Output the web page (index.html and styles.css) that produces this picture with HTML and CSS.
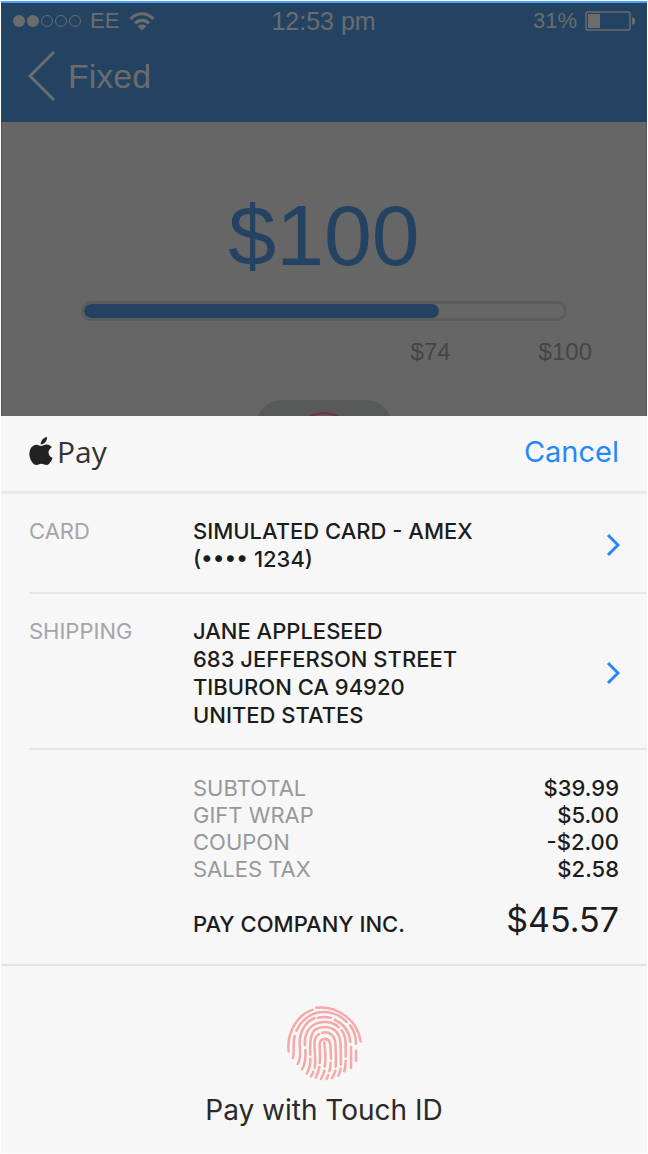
FILE: index.html
```html
<!DOCTYPE html>
<html lang="en">
<head>
<meta charset="utf-8">
<meta name="viewport" content="width=device-width, initial-scale=1">
<title>Apple Pay</title>
<link rel="stylesheet" href="styles.css">
</head>
<body>
<main class="screen">
  <header class="topbar">
    <div class="status">
      <div class="status-left">
        <svg class="signal" width="70" height="14" viewBox="0 0 70 14" aria-hidden="true">
          <circle cx="7" cy="7" r="6" fill="currentColor"/><circle cx="21" cy="7" r="6" fill="currentColor"/>
          <g fill="none" stroke="currentColor"><circle cx="35" cy="7" r="5.5"/><circle cx="49" cy="7" r="5.5"/><circle cx="63" cy="7" r="5.5"/></g>
        </svg>
        <span>EE</span>
        <svg width="26" height="20" viewBox="0 0 26 20" aria-hidden="true">
          <g fill="none" stroke="currentColor" stroke-width="3.2"><path d="M1.5 8C8 1 18 1 24.500 8"/><path d="M6 12.300C10 8.300 16 8.300 20 12.300"/></g>
          <path d="M8.500 15.200C11 12.800 15 12.800 17.500 15.200L13 19.500Z" fill="currentColor"/>
        </svg>
      </div>
      <span class="time">12:53 pm</span>
      <div class="status-right">
        <span>31%</span>
        <svg width="50" height="20" viewBox="0 0 50 20" aria-hidden="true">
          <rect x="1" y="1" width="44" height="18" rx="2" fill="none" stroke="currentColor" stroke-width="1.500"/>
          <rect x="3" y="3" width="12" height="14" fill="currentColor"/>
          <path d="M47 6.500a3.500 3.500 0 0 1 0 7Z" fill="currentColor"/>
        </svg>
      </div>
    </div>
    <a class="back" href="#">
      <svg width="28" height="50" viewBox="0 0 28 50" aria-hidden="true"><path d="M26 1L2 25L26 49" fill="none" stroke="currentColor" stroke-width="3"/></svg>
      Fixed
    </a>
  </header>

  <section class="goal">
    <h1 class="amount">$100</h1>
    <div class="progress" role="progressbar" aria-label="Raised" aria-valuemin="0" aria-valuemax="100" aria-valuenow="74">
      <div class="progress-fill" style="width:74%"></div>
    </div>
    <div class="scale"><span>$74</span><span>$100</span></div>
    <div class="pill">
      <svg width="60" height="60" viewBox="0 0 60 60" aria-hidden="true"><circle cx="30" cy="30" r="29" fill="none" stroke="currentColor" stroke-width="2"/></svg>
    </div>
  </section>

  <section class="sheet" aria-label="Apple Pay">
    <div class="sheet-head">
      <div class="brand">
        <svg width="24" height="29" viewBox="0 0 24 30" aria-hidden="true">
          <path d="M11.800 7.800C11.300 4 14.500.6 18.200 0C18.600 4 15.500 7.500 11.800 7.800Z"/>
          <path d="M12 9.200C14 9.200 15.500 7.600 18 7.700C20.200 7.800 22.200 8.900 23.200 10.700C18.300 13.400 18.900 19.700 24 21.800C22.800 25 20.500 28.900 18 28.900C15.700 28.900 14.800 27.600 12.500 27.600C10.200 27.600 9.100 28.900 7 28.900C3.600 28.900 0 22.800 0 17.600C0 11.500 3.500 7.900 7.300 7.900C9.400 7.900 10.800 9.200 12 9.200Z"/>
        </svg>
        <span>Pay</span>
      </div>
      <button class="cancel" type="button">Cancel</button>
    </div>

    <div class="details">
      <button class="row" type="button">
        <span class="label">CARD</span>
        <span class="value">SIMULATED CARD - AMEX<br>(•••• 1234)</span>
        <svg class="chevron" width="14" height="24" viewBox="0 0 14 24" aria-hidden="true"><path d="M2 2L12 12L2 22"/></svg>
      </button>
      <button class="row" type="button">
        <span class="label">SHIPPING</span>
        <span class="value">JANE APPLESEED<br>683 JEFFERSON STREET<br>TIBURON CA 94920<br>UNITED STATES</span>
        <svg class="chevron" width="14" height="24" viewBox="0 0 14 24" aria-hidden="true"><path d="M2 2L12 12L2 22"/></svg>
      </button>
    </div>

    <div class="summary">
      <table class="totals">
        <tbody>
          <tr><th scope="row">SUBTOTAL</th><td>$39.99</td></tr>
          <tr><th scope="row">GIFT WRAP</th><td>$5.00</td></tr>
          <tr><th scope="row">COUPON</th><td>-$2.00</td></tr>
          <tr><th scope="row">SALES TAX</th><td>$2.58</td></tr>
        </tbody>
        <tfoot><tr><th scope="row">PAY COMPANY INC.</th><td>$45.57</td></tr></tfoot>
      </table>
    </div>

    <button class="touch" type="button">
      <svg width="76" height="76" viewBox="36 31 228 228" aria-hidden="true">
        <g fill="none" stroke="currentColor" stroke-width="7.500" stroke-linecap="round">
          <path d="M44 170C38 118 66 62 116 45M127 39C190 32 250 76 260 140"/>
          <path d="M67 108C80 80 105 60 128 54C160 48 195 56 218 82M228 92C240 106 246 125 246 148M62 124C56 150 62 165 57 190M246 168V198"/>
          <path d="M71 208C80 192 79 180 77 150C75 110 96 80 122 70M132 69C145 66 158 66 170 69M182 76C210 88 226 112 229 142M231 157V220"/>
          <path d="M93 152C90 118 105 92 135 84C160 78 185 86 194 98M203 107C214 122 216 140 215 158V186M215 198C215 210 214 220 211 230M94 166C96 190 92 210 84 224"/>
          <path d="M109 180C109 165 103 120 125 104C150 90 187 96 197 130C203 155 199 190 201 210M109 192C110 207 105 225 98 237M200 222C199 230 196 236 193 243"/>
          <path d="M122 220C128 190 117 150 123 135C126 126 130 121 136 118M145 114C165 109 182 122 184 145C186 175 186 200 185 216M118 231C117 237 113 241 111 245M184 228C182 238 178 245 174 250"/>
          <path d="M137 205C140 185 136 165 137 148C138 130 163 126 168 146C171 165 170 180 171 192M136 217C134 230 130 240 125 249M170 204C170 214 169 222 166 230M163 241L158 253"/>
          <path d="M151 143C154 170 156 200 152 216M151 228C149 238 145 246 141 253"/>
        </g>
      </svg>
      <span>Pay with Touch ID</span>
    </button>
  </section>
</main>
</body>
</html>
```
FILE: styles.css
```css
* { box-sizing: border-box; }
body {
  margin: 0;
  padding: 1px;
  background: #fff;
  font-family: Inter, "Liberation Sans", sans-serif;
}
button {
  border: 0;
  padding: 0;
  background: none;
  font: inherit;
  color: inherit;
  cursor: pointer;
}
svg { display: block; flex: none; }
.screen {
  display: flex;
  flex-direction: column;
  min-height: calc(100vh - 2px);
}

/* Dimmed app behind the sheet */
.topbar, .goal { font-family: "Liberation Sans", Arial, sans-serif; }
.topbar {
  display: flex;
  flex-direction: column;
  align-items: stretch;
  background: #244362;
  border-top: 2px solid #4da1f5;
  color: #6b6c6e;
  padding-bottom: 20px;
}
.status {
  display: grid;
  grid-template-columns: 1fr auto 1fr;
  align-items: center;
  height: 36px;
  padding: 0 12px 0 11px;
  font-size: 22px;
}
.status-left, .status-right { display: flex; align-items: center; gap: 8px; }
.status-left svg:last-child { margin-left: 2px; }
.status-right { justify-content: flex-end; }
.time { font-size: 25px; }
.back {
  display: flex;
  align-self: flex-start;
  align-items: center;
  gap: 12px;
  margin: 11px 0 0 27px;
  height: 52px;
  color: inherit;
  font-size: 34px;
  text-decoration: none;
}
.goal {
  height: 294px;
  overflow: hidden;
  background: #666;
  border: solid #555;
  border-width: 0 1px;
  color: #444645;
}
.amount {
  margin: 64px 0 0;
  color: #244362;
  font-size: 86px;
  font-weight: 400;
  line-height: 98px;
  text-align: center;
}
.progress {
  margin: 17px 79px 0;
  height: 20px;
  border: 3px solid #5b5c5b;
  border-radius: 10px;
  overflow: hidden;
}
.progress-fill { height: 100%; border-radius: 7px; background: #244362; }
.scale {
  display: flex;
  justify-content: flex-end;
  gap: 88px;
  margin-top: 17px;
  padding-right: 54px;
  font-size: 24px;
  line-height: 28px;
}
.pill {
  display: flex;
  justify-content: center;
  width: 136px;
  margin: 34px auto 0;
  padding: 12px 0;
  border-radius: 26px;
  background: #585a59;
  color: #742f46;
}

/* Payment sheet */
.sheet {
  flex: 1;
  display: flex;
  flex-direction: column;
  background: #f7f7f7;
  color: #1c1c1c;
}
.sheet-head {
  display: flex;
  justify-content: space-between;
  align-items: center;
  height: 78px;
  padding: 0 28px 4px;
  border-bottom: 3px solid #e9e9ea;
}
.brand {
  display: flex;
  align-items: center;
  gap: 4px;
  color: #333;
  font-family: "Open Sans", "Noto Sans", sans-serif;
  font-size: 30px;
  font-weight: 400;
}
.brand svg { fill: #222; }
.cancel { color: #2388fb; font-size: 29px; }
.details { padding-left: 28px; font-size: 22px; font-weight: 500; }
.row {
  display: grid;
  grid-template-columns: 164px 1fr auto;
  width: 100%;
  padding: 23px 27px 19px 0;
  border-bottom: 2px solid #e6e6e7;
  line-height: 28px;
  text-align: left;
}
.label { color: #a5a5a9; font-weight: 400; }
.chevron { align-self: center; fill: none; stroke: #2388fb; stroke-width: 3; }
.summary { padding: 25px 28px 18px 192px; border-bottom: 2px solid #e3e3e4; }
.totals { width: 100%; border-collapse: collapse; font-size: 22px; line-height: 27px; }
.totals th { padding: 0; color: #98989c; font-weight: 400; text-align: left; }
.totals td { padding: 0; font-weight: 500; text-align: right; }
.totals tfoot th, .totals tfoot td { padding-top: 15px; line-height: 44px; vertical-align: baseline; }
.totals tfoot th { color: inherit; font-weight: 500; }
.totals tfoot td { font-size: 34px; font-weight: 400; }
.touch {
  flex: 1;
  display: flex;
  flex-direction: column;
  align-items: center;
  justify-content: flex-start;
  gap: 11px;
  padding: 39px 0 24px;
  color: #2a2a2a;
  font-size: 28px;
  line-height: 36px;
}
.touch svg { color: #f5a9a9; }
```
